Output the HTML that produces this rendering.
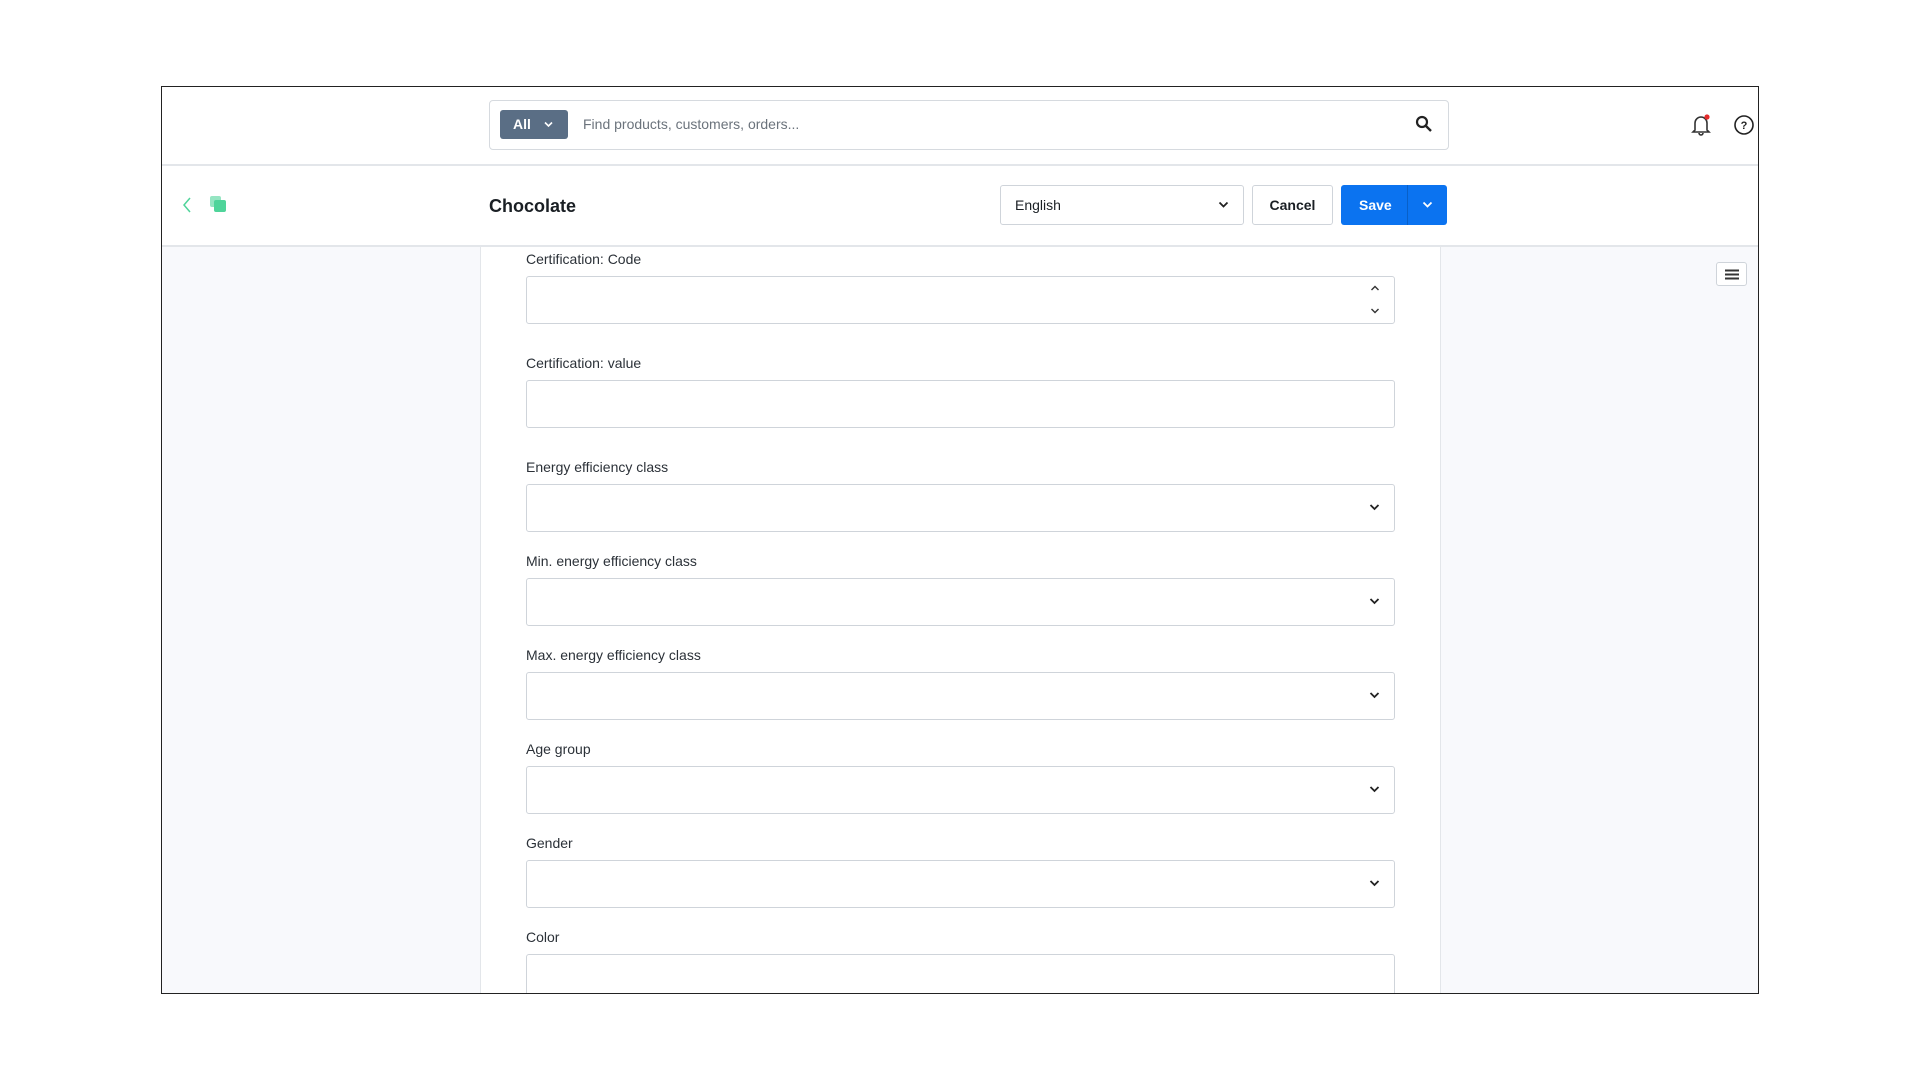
<!DOCTYPE html>
<html><head><meta charset="utf-8"><style>
*{box-sizing:border-box;margin:0;padding:0}
body{width:1920px;height:1080px;background:#fff;position:relative;font-family:"Liberation Sans",sans-serif;color:#1a1f24;overflow:hidden}
.frame{position:absolute;left:161px;top:86px;width:1598px;height:908px;border:1px solid #222;overflow:hidden;background:#fff}
.abs{position:absolute}
.lbl{position:absolute;left:364px;font-size:14px;color:#2b3138}
.inp{position:absolute;left:364px;width:869px;height:48px;border:1px solid #cfd4da;border-radius:3px;background:#fff}
.chev{position:absolute;right:14px;top:17px}
</style></head><body>
<div class="frame">
 <div class="abs" style="left:0;top:77px;width:1598px;height:2px;background:#e3e6ea"></div>
 <div class="abs" style="left:327px;top:13px;width:960px;height:50px;border:1px solid #d6dadf;border-radius:4px"></div>
 <div class="abs" style="left:338px;top:23px;width:68px;height:29px;background:#5a6e85;border-radius:3px;color:#fff;font-weight:bold;font-size:14px;line-height:29px;padding-left:13px">All
  <svg class="abs" style="left:44px;top:11px" width="9" height="7" viewBox="0 0 9 7"><path d="M1 1.5l3.5 3.5 3.5-3.5" stroke="#fff" stroke-width="1.6" fill="none"/></svg></div>
 <div class="abs" style="left:421px;top:29px;font-size:14px;color:#6b737c">Find products, customers, orders...</div>
 <svg class="abs" style="left:1253px;top:28px" width="18" height="18" viewBox="0 0 18 18"><circle cx="7" cy="7" r="5" stroke="#222" stroke-width="2.2" fill="none"/><path d="M11 11l5 5" stroke="#222" stroke-width="2.4"/></svg>
 <svg class="abs" style="left:1528px;top:26px" width="22" height="24" viewBox="0 0 22 24"><path d="M5 17V10a6 6 0 0 1 12 0v7l2 2H3z M9 20a2 2 0 0 0 4 0" stroke="#333" stroke-width="1.6" fill="none"/><circle cx="17" cy="4" r="2.6" fill="#e52b2b"/></svg>
 <svg class="abs" style="left:1571px;top:27px" width="22" height="22" viewBox="0 0 22 22"><circle cx="11" cy="11" r="9" stroke="#222" stroke-width="1.6" fill="none"/><text x="11" y="15" font-size="11" text-anchor="middle" font-family="Liberation Sans" font-weight="bold" fill="#222">?</text></svg>
 <svg class="abs" style="left:19px;top:108px" width="12" height="20" viewBox="0 0 12 20"><path d="M9 3L3 10l6 7" stroke="#4fd49a" stroke-width="1.5" fill="none"/></svg>
 <svg class="abs" style="left:47px;top:108px" width="18" height="18" viewBox="0 0 18 18"><rect x="1" y="1" width="11" height="11" rx="2" fill="#4fd49a" opacity=".6"/><rect x="5" y="5" width="12" height="12" rx="2" fill="#4fd49a"/></svg>
 <div class="abs" style="left:327px;top:109px;font-size:18px;font-weight:bold;color:#1a1f24">Chocolate</div>
 <div class="abs" style="left:838px;top:98px;width:244px;height:40px;border:1px solid #cfd4da;border-radius:3px;font-size:14px;line-height:38px;padding-left:14px">English
  <svg class="abs" style="right:14px;top:15px" width="11" height="8" viewBox="0 0 11 8"><path d="M1.5 1.5l4 4 4-4" stroke="#222" stroke-width="1.8" fill="none"/></svg></div>
 <div class="abs" style="left:1090px;top:98px;width:81px;height:40px;border:1px solid #cfd4da;border-radius:3px;font-size:14px;font-weight:bold;line-height:38px;text-align:center">Cancel</div>
 <div class="abs" style="left:1179px;top:98px;width:106px;height:40px;background:#0b73f0;border-radius:3px;color:#fff;font-size:14px;font-weight:bold;line-height:40px;padding-left:18px">Save
  <div class="abs" style="left:66px;top:0;width:1px;height:40px;background:#0860c8"></div>
  <svg class="abs" style="left:81px;top:16px" width="11" height="8" viewBox="0 0 11 8"><path d="M1.5 1.5l4 4 4-4" stroke="#fff" stroke-width="1.8" fill="none"/></svg></div>
 <div class="abs" style="left:0;top:158px;width:1598px;height:2px;background:#e3e6ea"></div>
 <div class="abs" style="left:0;top:160px;width:319px;height:760px;background:#f8f9fc;border-right:1px solid #e3e6ea"></div>
 <div class="abs" style="left:1278px;top:160px;width:320px;height:760px;background:#f8f9fc;border-left:1px solid #e3e6ea"></div>
 <div class="abs" style="left:1554px;top:175px;width:31px;height:24px;border:1px solid #cfd4da;border-radius:3px;background:#fff">
  <svg class="abs" style="left:8px;top:6px" width="14" height="11" viewBox="0 0 14 11"><path d="M0 1.5h14M0 5.5h14M0 9.5h14" stroke="#333" stroke-width="2"/></svg></div>

 <div class="lbl" style="top:164px">Certification: Code</div>
 <div class="inp" style="top:189px">
  <svg class="abs" style="right:14px;top:8px" width="10" height="30" viewBox="0 0 10 30"><path d="M1.5 5l3.5-3.5 3.5 3.5M1.5 24l3.5 3.5 3.5-3.5" stroke="#333" stroke-width="1.4" fill="none"/></svg></div>
 <div class="lbl" style="top:268px">Certification: value</div>
 <div class="inp" style="top:293px"></div>
 <div class="lbl" style="top:372px">Energy efficiency class</div>
 <div class="inp" style="top:397px"><svg class="chev" width="11" height="10" viewBox="0 0 11 10"><path d="M1.5 3l4 4 4-4" stroke="#222" stroke-width="1.8" fill="none"/></svg></div>
 <div class="lbl" style="top:466px">Min. energy efficiency class</div>
 <div class="inp" style="top:491px"><svg class="chev" width="11" height="10" viewBox="0 0 11 10"><path d="M1.5 3l4 4 4-4" stroke="#222" stroke-width="1.8" fill="none"/></svg></div>
 <div class="lbl" style="top:560px">Max. energy efficiency class</div>
 <div class="inp" style="top:585px"><svg class="chev" width="11" height="10" viewBox="0 0 11 10"><path d="M1.5 3l4 4 4-4" stroke="#222" stroke-width="1.8" fill="none"/></svg></div>
 <div class="lbl" style="top:654px">Age group</div>
 <div class="inp" style="top:679px"><svg class="chev" width="11" height="10" viewBox="0 0 11 10"><path d="M1.5 3l4 4 4-4" stroke="#222" stroke-width="1.8" fill="none"/></svg></div>
 <div class="lbl" style="top:748px">Gender</div>
 <div class="inp" style="top:773px"><svg class="chev" width="11" height="10" viewBox="0 0 11 10"><path d="M1.5 3l4 4 4-4" stroke="#222" stroke-width="1.8" fill="none"/></svg></div>
 <div class="lbl" style="top:842px">Color</div>
 <div class="inp" style="top:867px"></div>
</div>
</body></html>
